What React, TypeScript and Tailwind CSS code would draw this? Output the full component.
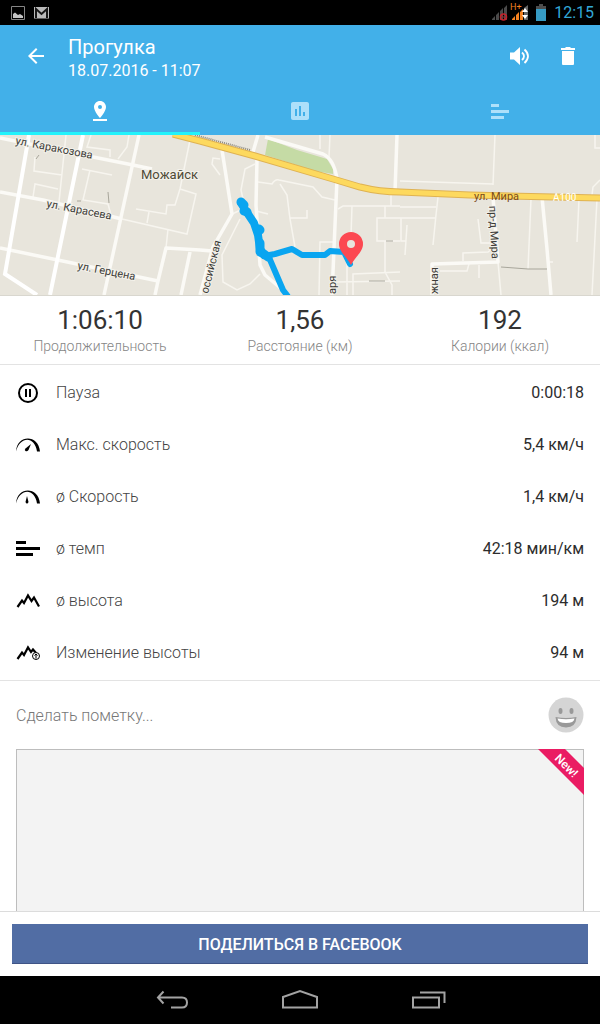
import React from 'react';

const thinRoads = [
  'M35 22L34 36L62 40M66 0L59 67M33 62L35 49L58 54M82 34L112 40M90 35L83 65L108 69L111 80',
  'M91 0L87 12L110 15V22M129 0L127 12L118 24M122 84L187 99L196 59L180 54',
  'M190 5L180 54L175 70H167L166 79L136 74M149 77L147 88M168 94L166 113',
  'M258 47L272 49Q275 44 279 45L313 52L322 62L335 65M280 49L287 60L290 84L295 112M290 83H307V75',
  'M255 29L245 34L241 55L243 64M240 84L222 120L223 147L237 155L250 149L260 139',
  'M220 24L213 23L212 29L220 40M256 76L268 79M232 79L243 74',
  'M320 0V14M330 0L329 22M338 74L343 71H400M352 71L350 130M391 60V71M400 83H377V106H400M385 71V83',
  'M335 147L400 146M353 160V139L400 137M385 106V137L392 150V160M347 115V160M319 160L320 107H333',
  'M495 0L493 50M400 46L493 49M438 62L436 80L433 110M400 72H436M400 83H435M407 90L405 120M401 83V106H406',
  'M478 84L481 108H491M492 114L488 117L463 118V126M440 136H467L469 129M479 130V143M498 127L501 160',
  'M531 64L528 134M579 64L577 107M597 64L592 160M592 60L593 52L600 45M595 0V13H600M547 127H553',
];

const roadNames = [
  { text: 'ул. Каракозова', x: 15, y: 9, angle: 11 },
  { text: 'ул. Карасева', x: 46, y: 72, angle: 11 },
  { text: 'ул. Герцена', x: 77, y: 134, angle: 11 },
  { text: 'оссийская', x: 208, y: 159, angle: -76 },
  { text: 'аря', x: 336, y: 159, angle: -90 },
  { text: 'пр-д Мира', x: 489, y: 71, angle: 87 },
  { text: 'жная', x: 438, y: 159, angle: -90 },
];

const RouteMap = () => (
  <div className="border-b border-[#d9d7cf]">
    <svg
      className="block h-40 w-full bg-[#e8e5dc]"
      viewBox="0 0 600 160"
      preserveAspectRatio="xMidYMid slice"
      fontFamily="Roboto, sans-serif"
      fill="none"
      role="img"
      aria-label="Карта маршрута"
    >
      <path d="M268 4L297 15L327 24L333 34V39L315 36L265 20Z" fill="#c5dba5" />
      <g stroke="#f7f5ef" strokeWidth="1.5">
        {thinRoads.map((d) => (
          <path key={d} d={d} />
        ))}
      </g>
      <g stroke="#fbfaf6" strokeWidth="3.5" strokeLinejoin="round">
        <path d="M0 3L83 20L133 30L152 34M0 57L43 65L122 84M0 113L77 129L158 146" />
        <path d="M139 0L104 160M200 115L166 113L158 146L155 160M190 117L181 160M200 115L212 116" />
        <path d="M222 15L232 79L213 112L200 160M258 0L253 17M257 24L256 70L260 130L265 140L290 161" />
        <path d="M265 2L323 19Q334 24 337 44L332 160M397 0L395 57M432 160V129L498 127L493 62M542 62L547 114L551 160" />
      </g>
      <path d="M29 0L5 139L37 160M83 0L50 160" stroke="#fff" strokeWidth="4" />
      <path d="M36 24L39 20M108 57L109 68M77 66H81M501 132L528 134L547 134M369 146H385M386 106H393" stroke="#a8a69b" />
      <path d="M195 0L213 5L250 15" stroke="#8c887c" strokeDasharray="1 1" strokeWidth="2" />
      <path d="M173 -1L200 6L255 21L333 44L360 52Q380 57 400 57L470 60L600 63" stroke="#dfb252" strokeWidth="7" />
      <path d="M173 -1L200 6L255 21L333 44L360 52Q380 57 400 57L470 60L600 63" stroke="#fdd95e" strokeWidth="5" />

      <g fontSize="11" fill="#3d3c38" stroke="#f3f1ea" strokeWidth="2" paintOrder="stroke">
        {roadNames.map(({ text, x, y, angle }) => (
          <text key={text} transform={`translate(${x} ${y}) rotate(${angle})`}>
            {text}
          </text>
        ))}
        <text x="141" y="44" fontSize="13" fill="#4f4a36">
          Можайск
        </text>
      </g>
      <text x="474" y="65" fontSize="11" fill="#7a4a1c">
        ул. Мира
      </text>
      <text x="553" y="66" fontSize="10" fill="#fff">
        А100
      </text>

      <g stroke="#0aa5f0" strokeLinejoin="round" strokeLinecap="round">
        <path d="M241 68L246 76L254 88L258 100L260 114L264 120" strokeWidth="8" />
        <path d="M241 67L244 70M244 76L247 77M259 94L260 95M260 108L260 117L264 119L268 122" strokeWidth="9" />
        <path d="M264 121L275 119L292 114L302 120H325L330 116L344 117L350 129M268 120L283 155L290 164" strokeWidth="6" />
      </g>
      <path d="M351 130C347 122 339 117 339 109A12 12 0 0 1 363 109C363 117 355 122 351 130Z" fill="#fc4851" />
      <circle cx="351" cy="109" r="4" fill="#e8e5dc" />
    </svg>
  </div>
);

const StatusBar = () => (
  <div className="flex h-[25px] items-center justify-between bg-black pl-[11px] pr-1.5">
    <div className="flex gap-[9px]">
      <svg className="h-3.5 w-3.5" viewBox="0 0 14 14" fill="none">
        <path d="M.5.5H13.5V13.5H.5Z" stroke="#858585" />
        <path d="M2 12V8L4 6.5L7 9L9 8L12 10V12Z" fill="#c4c4c4" />
      </svg>
      <svg className="h-3.5 w-[15px]" viewBox="0 0 15 14" fill="none">
        <path d="M0 1H15V12.5H0Z" fill="#b9b9b9" />
        <path d="M2 12V3L7.5 8L13 3V12" stroke="#161616" strokeWidth="2" />
      </svg>
    </div>
    <div className="flex items-center">
      <svg className="h-5 w-[56px]" viewBox="0 0 56 20" fill="none">
        <path d="M1 17V16L4 13V17ZM5 17V12L8 9V17ZM9 17V8L12 5V17ZM13 17V5L16 2V17Z" fill="#4a4a4a" />
        <circle cx="12.5" cy="14" r="3" stroke="#c4222b" strokeWidth="1.5" />
        <path d="M10.5 12L14.5 16" stroke="#c4222b" />
        <path d="M21 17V16L24 13V17ZM25 17V12L28 9V17ZM29 17V9L32 6V17Z" fill="#f58220" />
        <path d="M33 17V5L37 2V17Z" fill="#666" />
        <path d="M31 9L34 5L37 9ZM31 12H37L34 16Z" fill="#fff" />
        <path d="M45 3H48V1H52V3H55V6H45Z" fill="#4d4d4d" />
        <path d="M45 6H55V18H45Z" fill="#369bc4" />
        <text x="19" y="7" fontSize="9" fontFamily="Roboto, sans-serif" fill="#f58220">
          H+
        </text>
      </svg>
      <span className="ml-[7px] text-base leading-6 text-[#33a8d8]">12:15</span>
    </div>
  </div>
);

const Header = () => (
  <header className="bg-[#42b0e9] text-white">
    <div className="flex h-[62px] items-center pl-6 pr-5">
      <button aria-label="Назад" className="mr-5">
        <svg className="h-6 w-6" viewBox="0 0 24 24" fill="currentColor">
          <path d="M20 11H7.83l5.59-5.59L12 4l-8 8 8 8 1.41-1.41L7.83 13H20z" />
        </svg>
      </button>
      <div className="flex-1 pt-[5px]">
        <h1 className="text-xl leading-6">Прогулка</h1>
        <p className="text-base leading-6">18.07.2016 - 11:07</p>
      </div>
      <button aria-label="Звук" className="mr-6">
        <svg className="h-6 w-6" viewBox="0 0 24 24" fill="none">
          <path d="M2 8.5H6L12 3V21L6 15.5H2Z" fill="currentColor" />
          <path d="M14 8.5Q18 12 14 16M16.5 5.5Q23.5 12 16.5 19" stroke="currentColor" strokeWidth="1.8" />
        </svg>
      </button>
      <button aria-label="Удалить">
        <svg className="h-6 w-6" viewBox="0 0 24 24" fill="currentColor">
          <path d="M6 7H18V20Q18 21 17 21H7Q6 21 6 20ZM5 4H9L10 3H14L15 4H19V6H5Z" />
        </svg>
      </button>
    </div>
    <div role="tablist" className="grid h-12 grid-cols-3">
      <button
        role="tab"
        aria-selected="true"
        aria-label="Карта"
        className="flex items-center justify-center border-b-[3px] border-[#22f3fb] pt-[3px]"
      >
        <svg className="h-6 w-6" viewBox="0 0 24 24" fill="currentColor" fillRule="evenodd">
          <path d="M18 8c0-3.31-2.69-6-6-6S6 4.690 6 8c0 4.5 6 11 6 11s6-6.5 6-11zM10 8a2 2 0 1 1 4 0a2 2 0 1 1-4 0zM5 20v2h14v-2H5z" />
        </svg>
      </button>
      <button role="tab" aria-selected="false" aria-label="Графики" className="flex items-center justify-center text-[#aee0fa]">
        <svg className="h-6 w-6" viewBox="0 0 24 24" fill="currentColor">
          <path d="M19 3H5c-1.1 0-2 .9-2 2v14c0 1.1.9 2 2 2h14c1.1 0 2-.9 2-2V5c0-1.1-.9-2-2-2zM9 17H7v-7h2v7zm4 0h-2V7h2v10zm4 0h-2v-4h2v4z" />
        </svg>
      </button>
      <button role="tab" aria-selected="false" aria-label="Темп" className="flex items-center justify-center text-[#aee0fa]">
        <svg className="h-6 w-6" viewBox="0 0 24 24" fill="currentColor">
          <path d="M3 5H11V8H3ZM3 11H21V14H3ZM3 17H16V20H3Z" />
        </svg>
      </button>
    </div>
  </header>
);

const totals = [
  { value: '1:06:10', label: 'Продолжительность' },
  { value: '1,56', label: 'Расстояние (км)' },
  { value: '192', label: 'Калории (ккал)' },
];

const gaugeArc = 'M0 18.5C1 1.2 22.5 1 24 18.5H21C19 3 4 2.5 0 18.5Z';

const metrics = [
  {
    label: 'Пауза',
    value: '0:00:18',
    icon: (
      <>
        <circle cx="12" cy="12" r="9" fill="none" stroke="currentColor" strokeWidth="2" />
        <path d="M9 8H11V16H9ZM13 8H15V16H13Z" />
      </>
    ),
  },
  {
    label: 'Макс. скорость',
    value: '5,4 км/ч',
    icon: (
      <>
        <path d={gaugeArc} />
        <path d="M15 11L12.5 17Q11 19 9.5 18T9.5 15.5Z" />
      </>
    ),
  },
  {
    label: 'ø Скорость',
    value: '1,4 км/ч',
    icon: (
      <>
        <path d={gaugeArc} />
        <path d="M11 11L12.5 17Q12 18.5 11 18.5T9.5 17Z" />
      </>
    ),
  },
  { label: 'ø темп', value: '42:18 мин/км', icon: <path d="M0 4H10V7H0ZM0 10H24V13H0ZM0 16H17V19H0Z" /> },
  {
    label: 'ø высота',
    value: '194 м',
    icon: (
      <path d="M1.5 18L6 11.5L8 14L12 6.5L15.5 12L18 8.5L23 17.5" fill="none" stroke="currentColor" strokeWidth="2.2" />
    ),
  },
  {
    label: 'Изменение высоты',
    value: '94 м',
    icon: (
      <>
        <path d="M1.5 18L6 11.5L8 14L12 6.5L15 11L17 8.5L20 12" fill="none" stroke="currentColor" strokeWidth="2.2" />
        <circle cx="20" cy="15" r="3.5" fill="#fff" stroke="currentColor" />
        <path d="M20 17.5V13M18.5 14.5L20 13L21.5 14.5" fill="none" stroke="currentColor" />
      </>
    ),
  },
];

const Totals = () => (
  <dl className="grid grid-cols-3 border-b border-[#e3e3e3] py-2 text-center">
    {totals.map(({ value, label }) => (
      <div key={label} className="flex flex-col-reverse">
        <dt className="text-sm leading-5 font-light text-[#858585]">{label}</dt>
        <dd className="text-[26px] leading-8 text-[#333]">{value}</dd>
      </div>
    ))}
  </dl>
);

const Metrics = () => (
  <dl className="border-b border-[#e3e3e3] pb-px pt-0.5">
    {metrics.map(({ label, value, icon }) => (
      <div key={label} className="flex h-[52px] items-center px-4">
        <svg className="mr-4 h-6 w-6 text-black" viewBox="0 0 24 24" fill="currentColor">
          {icon}
        </svg>
        <dt className="flex-1 text-base font-light text-[#444]">{label}</dt>
        <dd className="text-base text-[#2c2c2c]">{value}</dd>
      </div>
    ))}
  </dl>
);

const Note = () => (
  <div className="flex h-[68px] items-center px-4">
    <input
      aria-label="Пометка"
      placeholder="Сделать пометку..."
      className="min-w-0 flex-1 pt-0.5 text-base font-light outline-none placeholder:text-[#777]"
    />
    <button aria-label="Настроение">
      <svg className="h-9 w-9" viewBox="0 0 36 36">
        <circle cx="18" cy="18" r="17.5" fill="#d5d5d5" />
        <ellipse cx="12.5" cy="14" rx="2" ry="3" fill="#999" />
        <ellipse cx="23.5" cy="14" rx="2" ry="3" fill="#999" />
        <path d="M7.5 20Q18 22 28.5 20Q28 30.5 18 30.5T7.5 20Z" fill="#999" />
        <path d="M9.5 21.5Q18 23 26.5 21.5Q26 26 18 26T9.5 21.5Z" fill="#fff" />
      </svg>
    </button>
  </div>
);

const Photos = () => (
  <div className="relative mx-4 min-h-40 flex-1 border border-b-0 border-[#bdbdbd] bg-[#f3f3f3]">
    <svg className="absolute -top-px -right-px h-[46px] w-[46px]" viewBox="0 0 46 46">
      <path d="M0 0H27L46 19V46Z" fill="#ea1c63" />
      <text
        transform="translate(16 10) rotate(45)"
        fontSize="12"
        fontWeight="500"
        fontFamily="Roboto, sans-serif"
        fill="#fff"
      >
        New!
      </text>
    </svg>
  </div>
);

const NavBar = () => (
  <nav className="flex h-12 items-center justify-center gap-[92px] bg-black text-[#a3a3a3]">
    <button aria-label="Назад">
      <svg className="h-9 w-9" viewBox="0 0 36 36" fill="none" stroke="currentColor" strokeWidth="2">
        <path d="M9.5 9.5L4 15.5L9.5 21.5M4 15.5H28Q33 15.5 33 20.5T28 25.5H17" />
      </svg>
    </button>
    <button aria-label="Домой">
      <svg className="h-9 w-9" viewBox="0 0 36 36" fill="none" stroke="currentColor" strokeWidth="2">
        <path d="M1 25.5V15L18 9L35 15V25.5Z" />
      </svg>
    </button>
    <button aria-label="Недавние">
      <svg className="h-9 w-9" viewBox="0 0 36 36" fill="none" stroke="currentColor" strokeWidth="2">
        <path d="M3 15.500H29V25.500H3ZM10 10.500H34.500V21" />
      </svg>
    </button>
  </nav>
);

export default function App() {
  return (
    <div className="flex min-h-screen flex-col bg-white font-['Roboto',sans-serif]">
      <StatusBar />
      <Header />
      <main className="flex flex-1 flex-col">
        <RouteMap />
        <Totals />
        <Metrics />
        <Note />
        <Photos />
      </main>
      <footer className="border-t border-[#dcdcdc] p-3">
        <button className="h-10 w-full bg-[#516da4] pt-px text-base font-medium text-white shadow-[inset_0_-1px_0_#3f5486]">
          ПОДЕЛИТЬСЯ В FACEBOOK
        </button>
      </footer>
      <NavBar />
    </div>
  );
}
